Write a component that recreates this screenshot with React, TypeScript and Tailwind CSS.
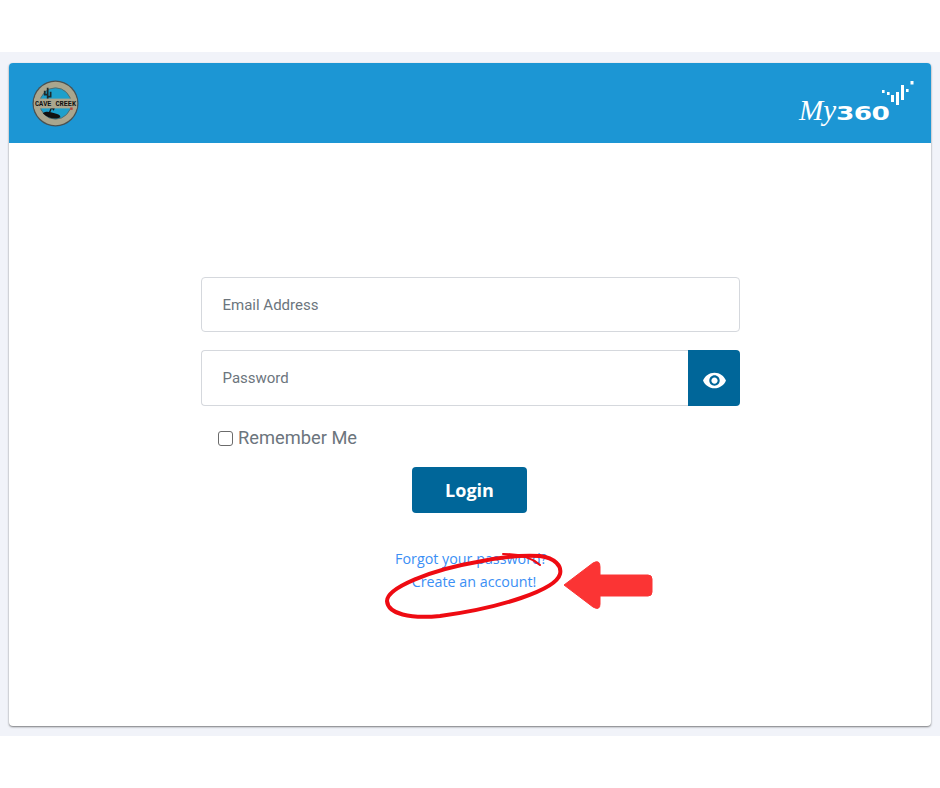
import { MdVisibility } from 'react-icons/md';

function CaveCreekLogo() {
  return (
    <svg width="47" height="47" viewBox="0 0 48 48">
      <circle cx="24" cy="24" r="23.5" fill="#4a5252" />
      <circle cx="24" cy="24" r="22.2" fill="#aaa68e" />
      <circle cx="24" cy="24" r="16" fill="#1ca0cc" stroke="#5a5f58" strokeWidth="0.8" />
      {/* ground and cactus */}
      <path d="M11 34 C15 31 19 33 23 34 C27 35 29 36 29 38 C24 41 16 39 11 34 Z" fill="#111" />
      <path d="M16 21 V8 M16 15 H13 V11 M16 17 H19 V12" stroke="#1d2a2a" strokeWidth="1.8" fill="none" />
      <path d="M18 33 L20 28 L22 30 L23 27" stroke="#1a1a1a" strokeWidth="1.4" fill="none" />
      <rect x="2" y="19" width="44" height="10" fill="#aaa68e" />
      <text x="24" y="26.6" textAnchor="middle" fontFamily="'Liberation Mono', monospace" fontWeight="700" fontSize="7" fill="#111111">CAVE CREEK</text>
      <rect x="39" y="28" width="2.5" height="2.5" fill="#b4483e" />
    </svg>
  );
}

function My360Logo() {
  const bars = [
    [82, 12, 2.6, 3], [87, 14, 2.6, 3], [91, 17, 3, 7], [96, 14, 3, 13], [101, 7, 3, 15],
    [106, 11, 2.6, 3], [110.5, 3, 3, 3.5],
  ];
  return (
    <div className="relative w-[116px] h-[50px]">
      <svg width="116" height="50" viewBox="0 0 116 50" className="absolute inset-0">
        {bars.map((b, i) => (
          <rect key={i} x={b[0]} y={b[1]} width={b[2]} height={b[3]} fill="#ffffff" />
        ))}
      </svg>
      <div className="absolute left-[-1px] top-[17px] flex items-baseline text-white">
        <span className="font-['Liberation_Serif',serif] italic text-[29px] leading-[30px]">My</span>
        <span className="font-['DejaVu_Sans',sans-serif] font-bold text-[20px] leading-[30px] tracking-[-0.5px] scale-x-[1.32] origin-left">360</span>
      </div>
    </div>
  );
}

export default function App() {
  return (
    <div className="relative min-h-[788px] bg-white pt-[52px] font-['Roboto',sans-serif]">
      <div className="bg-[#f1f3f9] h-[684px] px-[9px] pt-[11px]">
        <div className="h-[663px] bg-white rounded-[4px] shadow-[0_1px_2px_rgba(0,0,0,0.5)] overflow-hidden">
          <header className="h-[80px] bg-[#1c96d4] flex items-center justify-between pl-[23px] pr-[15px]">
            <CaveCreekLogo />
            <My360Logo />
          </header>

          <div className="w-[539px] ml-[192px] pt-[134px] flex flex-col">
            <input
              placeholder="Email Address"
              className="h-[55px] w-full border border-[#d5d8dd] rounded-[4px] pl-[20.5px] pr-[21px] text-[15px] bg-white outline-none placeholder:text-[#6c757d]"
            />
            <div className="flex mt-[18px] h-[56px]">
              <input
                placeholder="Password"
                className="flex-1 min-w-0 border border-r-0 border-[#d5d8dd] rounded-l-[4px] pl-[20.5px] pr-[21px] pt-[1px] text-[15px] bg-white outline-none placeholder:text-[#6c757d]"
              />
              <button className="w-[52px] pt-[4px] bg-[#006699] rounded-r-[4px] flex items-center justify-center text-white">
                <MdVisibility size={25} />
              </button>
            </div>
            <label className="flex items-center mt-[21px] ml-[17px] h-[22px] text-[18.3px] text-[#6c757d]">
              <span className="w-[15px] h-[15px] border border-[#6b6b6b] rounded-[3px] bg-white mr-[5px]" />
              Remember Me
            </label>
            <button className="self-center mr-[2px] mt-[18px] w-[115px] h-[46px] pt-[1px] bg-[#006699] rounded-[4px] text-white text-[18px] font-bold font-['Open_Sans',sans-serif]">
              Login
            </button>
            <div className="mt-[34px] flex flex-col items-center text-[14.3px] leading-[23px] text-[#3b8ff5] font-['Open_Sans',sans-serif] pl-[7px]">
              <a className="pr-[6px]">Forgot your password?</a>
              <a>Create an account!</a>
            </div>
          </div>
        </div>
      </div>

      {/* hand drawn annotation */}
      <svg width="290" height="80" viewBox="0 0 290 80" className="absolute left-[380px] top-[548px] pointer-events-none" fill="none">
        <path
          d="M97 14 C120 9 145 7 160 8 C175 10 182 18 180 26 C176 42 120 60 60 68 C30 71 8 66 7 53 C7 40 50 22 97 14"
          stroke="#ee0b12"
          strokeWidth="4"
          strokeLinecap="round"
        />
        <path d="M123 6 C140 6 152 10 160 17" stroke="#ee0b12" strokeWidth="2" strokeLinecap="round" />
        <path
          d="M184 37 L213 15 Q220 11 220 19 V27 H268 Q272 27 272 31 V44 Q272 48 268 48 H220 V56 Q220 63 213 59 Z"
          fill="#fb3434"
          stroke="#fb3434"
          strokeLinejoin="round"
        />
      </svg>
    </div>
  );
}
